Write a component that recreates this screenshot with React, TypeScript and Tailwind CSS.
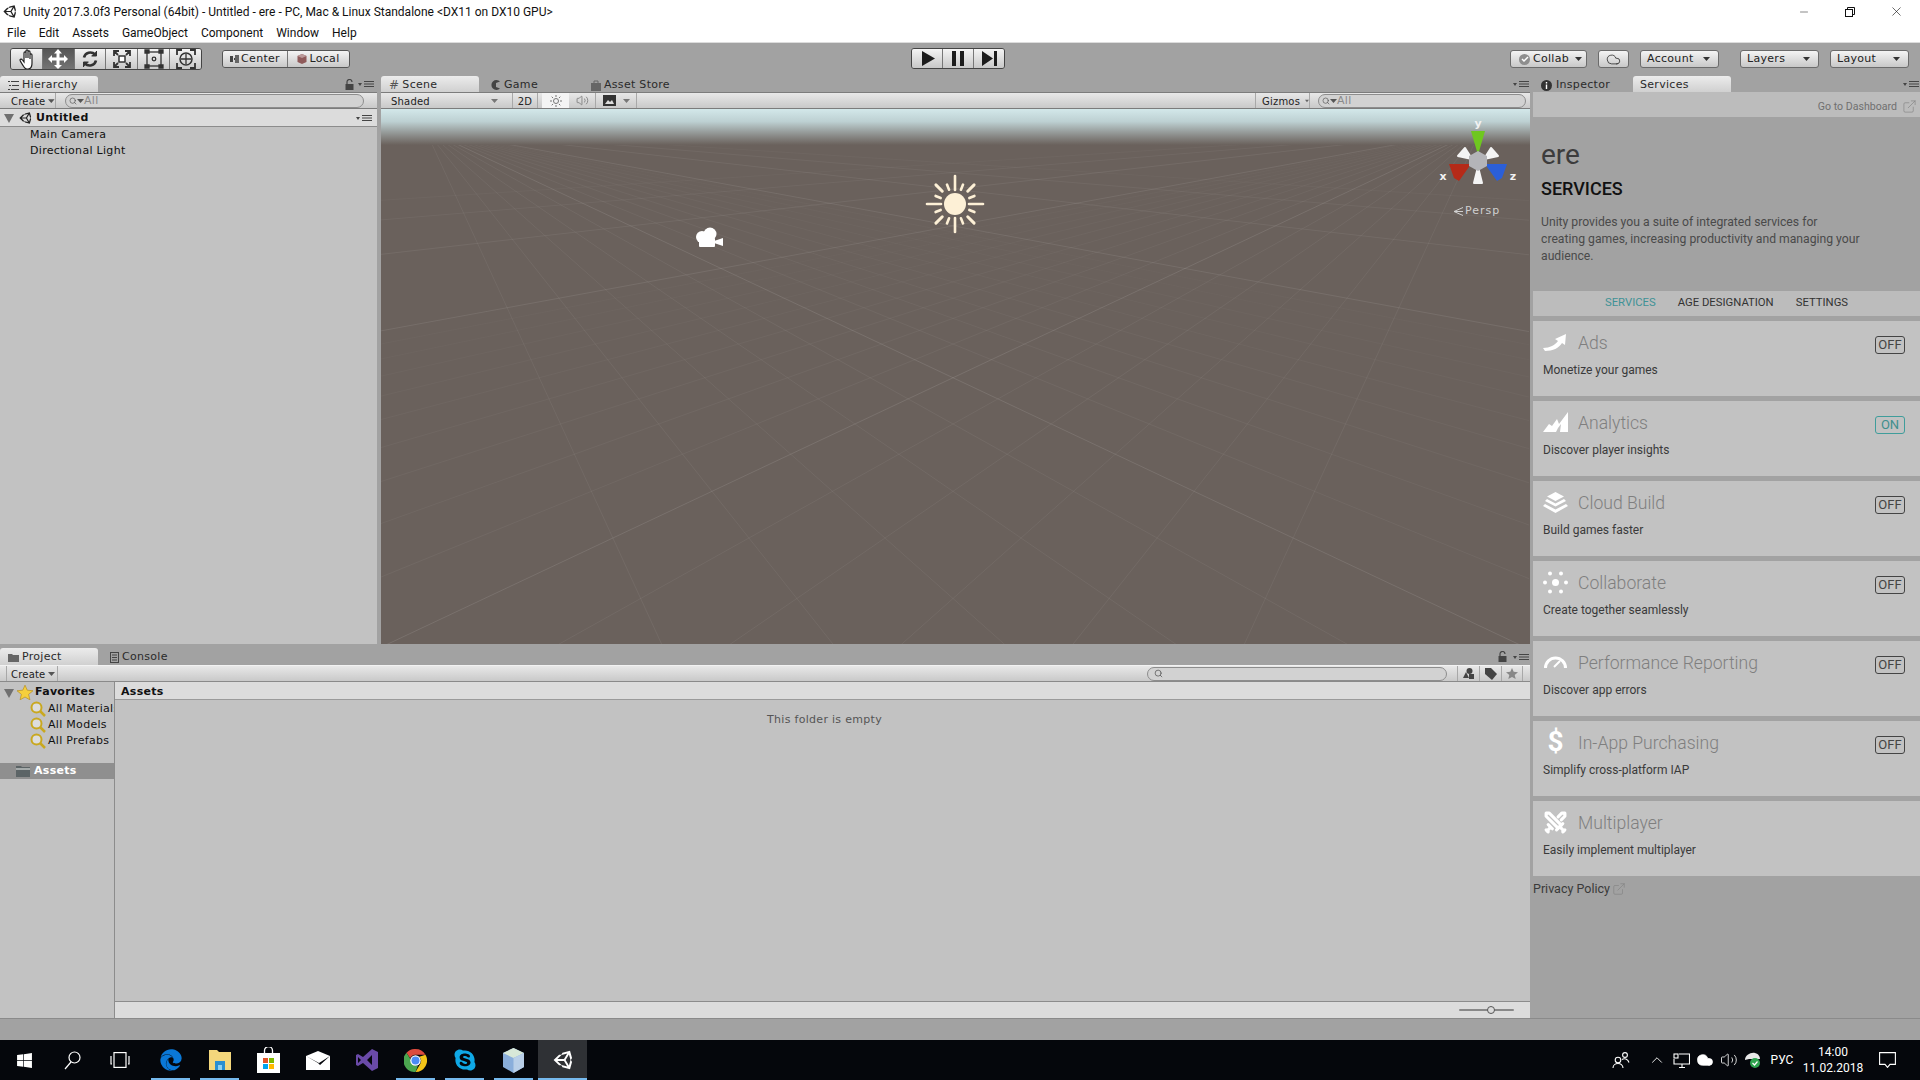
import { ReactNode } from 'react';
import { ChevronUp, Cloud, ExternalLink, Minus, Search, Swords, Volume2, X } from 'lucide-react';
import { FaEdge, FaSkype, FaUnity, FaWindows } from 'react-icons/fa';

const editorFont = "font-['DejaVu_Sans',sans-serif] text-[11px] tracking-[0.3px]";
const smallFont = "font-['DejaVu_Sans',sans-serif] text-[10px] tracking-[0.2px]";
const uiFont = "font-['Roboto',sans-serif]";
const systemFont = "font-['Roboto',sans-serif]";
const barBg = 'bg-linear-to-b from-[#e8e8e8] to-[#c9c9c9]';
const buttonBg = 'bg-linear-to-b from-[#f4f4f4] to-[#c8c8c8]';

/* little editor glyphs */
function PaneMenu() {
  return (
    <svg width="16" height="8" viewBox="0 0 16 8" fill="#444">
      <path d="M0 3h4L2 6z" />
      <path d="M6 1h10v1H6zM6 3.5h10v1H6zM6 6h10v1H6z" />
    </svg>
  );
}

function LockIcon() {
  return (
    <svg width="9" height="11" viewBox="0 0 9 11">
      <path d="M2 5V3a2.5 2.5 0 0 1 5 0" fill="none" stroke="#444" strokeWidth="1.2" />
      <rect x="0.5" y="5" width="8" height="6" fill="#444" />
    </svg>
  );
}

function Caret({ color = '#333' }: { color?: string }) {
  return (
    <svg width="7" height="4" viewBox="0 0 7 4" fill={color}>
      <path d="M0 0h7L3.5 4z" />
    </svg>
  );
}

function Disclosure() {
  return (
    <svg width="10" height="10" viewBox="0 0 10 10" fill="#707070">
      <path d="M0 1h10L5 10z" />
    </svg>
  );
}

function SearchField({ className }: { className: string }) {
  return (
    <div className={`${className} h-[14px] rounded-full border border-[#8d8d8d] bg-[#d2d2d2] flex items-center pl-[3px] text-[#8a8a8a] ${editorFont}`}>
      <Search size={8} color="#555" strokeWidth={2} />
      <Caret color="#555" />
      <span className="leading-none">All</span>
    </div>
  );
}

function ToolIcon({ kind }: { kind: number }) {
  const paths = [
    <path key="h" transform="translate(2 0)" d="M6 18c-2-3-4-6-4-7s1.500-1.500 2.500 0L6 13V4c0-1.500 2-1.500 2 0v5-7c0-1.500 2-1.500 2 0v7-6c0-1.500 2-1.500 2 0v7-4c0-1.500 2-1.500 2 0v8c0 4-2 6-4 6H9c-1 0-2-.5-3-2z" fill="#fff" stroke="#222" strokeWidth="1.200" />,
    <path key="m" d="M10 0l4 4.500h-2.500V8.500H16V6l4 4-4 4v-2.500h-4.500V16H14l-4 4-4-4h2.500v-4.500H4V14l-4-4 4-4v2.500h4.500V4.500H6z" fill="#fff" />,
    <g key="r" fill="none" stroke="#333" strokeWidth="2.600"><path d="M4 8.500a6.500 6.500 0 0 1 11-3" /><path d="M16 11.500a6.500 6.500 0 0 1-11 3" /><path d="M16.500 2v5h-5M3.500 18v-5h5" strokeWidth="1" fill="#333" /></g>,
    <g key="s" fill="none" stroke="#333" strokeWidth="1.800"><rect x="7" y="7" width="6" height="6" fill="#fff" strokeWidth="1.500" /><path d="M2 7V2h5M18 7V2h-5M2 13v5h5M18 13v5h-5M3 3l3 3M17 3l-3 3M3 17l3-3M17 17l-3-3" /></g>,
    <g key="t" fill="none" stroke="#333" strokeWidth="1.300"><rect x="3" y="3" width="14" height="14" /><circle cx="10" cy="10" r="1.800" /><path d="M1 1h4v3H1zM15 1h4v3h-4zM1 16h4v3H1zM15 16h4v3h-4z" fill="#333" /></g>,
    <g key="a" fill="none" stroke="#333" strokeWidth="1.800"><path d="M1 6V1h5M19 6V1h-5M1 14v5h5M19 14v5h-5" /><circle cx="10" cy="10" r="6" strokeWidth="1.500" /><path d="M10 5v10M5 10h10" strokeWidth="1.300" /></g>,
  ];
  return (
    <svg width="20" height="20" viewBox="0 0 20 20">
      {paths[kind]}
    </svg>
  );
}

function Toolbar() {
  return (
    <div className="h-[34px] bg-[#a2a2a2] border-t border-[#dcdcdc] flex items-start pt-[5px] text-[#222]">
      <div className="ml-[10px] flex w-[192px] h-[22px] rounded-[3px] border border-[#444] overflow-hidden">
        {[0, 1, 2, 3, 4, 5].map((i) => (
          <div
            key={i}
            className={`flex-1 flex items-center justify-center border-r border-[#777] last:border-r-0 ${i === 1 ? 'bg-linear-to-b from-[#565656] to-[#747474]' : buttonBg}`}
          >
            <ToolIcon kind={i} />
          </div>
        ))}
      </div>
      <div className={`ml-[20px] mt-[2px] flex w-[128px] h-[18px] rounded-[3px] border border-[#555] overflow-hidden ${editorFont}`}>
        <div className={`w-[65px] flex items-center justify-center gap-[2px] border-r border-[#777] ${buttonBg}`}>
          <svg width="9" height="8" viewBox="0 0 9 8" fill="#444"><path d="M0 1h3v6H0zM4 3h5v2H4z" /><path d="M5 0h4v8H5z" fill="#666" /></svg>
          <span>Center</span>
        </div>
        <div className={`flex-1 flex items-center justify-center gap-[2px] ${buttonBg}`}>
          <svg width="10" height="10" viewBox="0 0 10 10"><path d="M5 0l4.500 2v6L5 10 .5 8V2z" fill="#8f5a5a" /><path d="M.5 2L5 4l4.500-2L5 0z" fill="#b99" /></svg>
          <span>Local</span>
        </div>
      </div>
      <div className="ml-[561px] flex w-[94px] h-[21px] rounded-[3px] border border-[#444] overflow-hidden">
        {['M2 0l13 7.500L2 15z', 'M0 0h4v15H0zM8 0h4v15H8z', 'M0 0l11 7.500L0 15zM12 0h3v15h-3z'].map((d, i) => (
          <div key={d} className={`flex-1 flex items-center justify-center border-r border-[#777] last:border-r-0 ${buttonBg}`}>
            <svg width={i === 1 ? 12 : 15} height="15" viewBox={i === 1 ? '0 0 12 15' : '0 0 15 15'} fill="#1c1c1c"><path d={d} /></svg>
          </div>
        ))}
      </div>
      <div className={`ml-auto mr-[11px] mt-[2px] flex ${editorFont}`}>
        <div className={`w-[77px] h-[18px] rounded-[3px] border border-[#6b6b6b] flex items-center pl-[8px] gap-[3px] ${buttonBg}`}>
          <span className="size-[11px] rounded-full bg-[#8e8e8e] flex items-center justify-center">
            <svg width="8" height="8" viewBox="0 0 8 8" fill="none" stroke="#fff" strokeWidth="1.500"><path d="M1 4l2 2 4-4" /></svg>
          </span>
          <span>Collab</span>
          <span className="ml-[3px]"><Caret /></span>
        </div>
        <div className={`ml-[11px] w-[31px] h-[18px] rounded-[3px] border border-[#6b6b6b] flex items-center justify-center ${buttonBg}`}>
          <Cloud size={15} strokeWidth={1.200} color="#222" />
        </div>
        <DropButton label="Account" className="ml-[11px]" />
        <DropButton label="Layers" className="ml-[21px]" />
        <DropButton label="Layout" className="ml-[11px]" />
      </div>
    </div>
  );
}

function DropButton({ label, className }: { label: string; className: string }) {
  return (
    <div className={`${className} w-[79px] h-[18px] rounded-[3px] border border-[#6b6b6b] flex items-center justify-between pl-[6px] pr-[8px] ${buttonBg}`}>
      <span>{label}</span>
      <Caret />
    </div>
  );
}

function Tab({ icon, label, active, className = '' }: { icon?: ReactNode; label: string; active?: boolean; className?: string }) {
  return (
    <div
      className={`h-[16px] w-[98px] pt-[2px] flex items-center gap-[3px] rounded-t-[3px] text-[#2a2a2a] ${editorFont} ${active ? 'bg-linear-to-b from-[#ececec] to-[#d0d0d0] pl-[8px]' : ''} ${className}`}
    >
      {icon}
      <span>{label}</span>
    </div>
  );
}

function Hierarchy() {
  return (
    <div className="w-[377px] flex flex-col">
      <div className="h-[16px] flex items-center">
        <Tab
          active
          label="Hierarchy"
          icon={
            <svg width="11" height="9" viewBox="0 0 11 9" fill="#444"><path d="M0 0h2v1H0zM3 0h8v1H3zM1 4h2v1H1zM4 4h7v1H4zM0 8h2v1H0zM3 8h8v1H3z" /></svg>
          }
        />
        <div className="ml-auto flex items-center gap-[4px] pr-[3px]">
          <LockIcon />
          <PaneMenu />
        </div>
      </div>
      <div className={`h-[17px] border-t border-[#7c7c7c] border-b ${barBg} flex items-center`}>
        <div className={`w-[56px] h-full pl-[11px] pt-[1px] flex items-center gap-[3px] border-r border-[#a8a8a8] text-[#222] ${smallFont}`}>
          <span>Create</span>
          <Caret color="#555" />
        </div>
        <SearchField className="ml-[9px] w-[299px]" />
      </div>
      <div className="flex-1 bg-[#c2c2c2]">
        <div className="h-[18px] bg-[#dcdcdc] border-b border-[#8c8c8c] flex items-center pl-[4px] pt-[1px] text-[#111]">
          <Disclosure />
          <FaUnity size={14} color="#222" className="ml-[5px]" />
          <span className={`ml-[3px] font-bold ${editorFont}`}>Untitled</span>
          <span className="ml-auto pr-[5px]"><PaneMenu /></span>
        </div>
        <div className={`pl-[30px] text-[#111] ${editorFont}`}>
          <div className="h-[16px] leading-[16px]">Main Camera</div>
          <div className="h-[16px] leading-[16px]">Directional Light</div>
        </div>
      </div>
    </div>
  );
}

/* ground grid of the scene view: two pencils of lines from the vanishing points */
const HORIZON = 20;
function gridLines() {
  const lines: { x1: number; y1: number; x2: number; y2: number; o: number }[] = [];
  const add = (v: number, o: number) => {
    const y = HORIZON + 1 / v;
    for (const vpx of [44, 1100]) {
      const slope = (y - HORIZON) / (572 - vpx);
      lines.push({ x1: vpx, y1: HORIZON, x2: vpx + 1400 * Math.sign(572 - vpx), y2: HORIZON + 1400 * Math.abs(slope), o });
    }
  };
  for (let n = 0; n < 5; n++) add(0.00402 + 0.0063 * n, 0.1 - n * 0.018);
  for (let k = -5; k <= 9; k++) {
    if (k === 0) continue;
    const v = 0.00402 + 0.00063 * k;
    if (v > 0.0004) add(v, k < 0 ? 0.055 : Math.max(0.02, 0.05 - k * 0.004));
  }
  return lines;
}

function Sun() {
  const rays: ReactNode[] = [];
  for (let i = 0; i < 16; i++) {
    const a = (i * Math.PI) / 8;
    const [r1, r2, w] = i % 4 === 0 ? [14, 28, 2.6] : i % 2 === 0 ? [18, 27, 3] : [15.500, 21, 2.600];
    rays.push(
      <line key={i} x1={30 + r1 * Math.cos(a)} y1={30 + r1 * Math.sin(a)} x2={30 + r2 * Math.cos(a)} y2={30 + r2 * Math.sin(a)} strokeWidth={w} stroke="#fdf0d6" strokeLinecap="round" />
    );
  }
  return (
    <svg width="60" height="60" viewBox="0 0 60 60" className="absolute left-[544px] top-[65px]">
      {rays}
      <circle cx="30" cy="30" r="11" fill="#fdf0d6" />
    </svg>
  );
}

function Gizmo() {
  return (
    <svg width="100" height="90" viewBox="0 0 100 90" className="absolute left-[1047px] top-[2px]">
      <polygon points="43,20 57,20 50,44" fill="#6fc71f" />
      <polygon points="44,48 30,45 37,37" fill="#f4f4f4" stroke="#f4f4f4" strokeWidth="2" strokeLinejoin="round" />
      <polygon points="56,48 70,45 63,37" fill="#f4f4f4" stroke="#f4f4f4" strokeWidth="2" strokeLinejoin="round" />
      <polygon points="50,56 46,72 54,72" fill="#f4f4f4" stroke="#f4f4f4" strokeWidth="2" strokeLinejoin="round" />
      <polygon points="21,53 43,53 31,70 26,67" fill="#b52a18" />
      <polygon points="79,53 57,53 69,70 74,67" fill="#2b5fd8" />
      <polygon points="50,40 59,45 59,55 50,60 41,55 41,45" fill="#b4b4b8" />
      <text x="50" y="16" textAnchor="middle" fill="#f2f2f2" fontSize="11" fontWeight="700" fontFamily="DejaVu Sans">y</text>
      <text x="15" y="69" textAnchor="middle" fill="#f2f2f2" fontSize="11" fontWeight="700" fontFamily="DejaVu Sans">x</text>
      <text x="85" y="69" textAnchor="middle" fill="#f2f2f2" fontSize="11" fontWeight="700" fontFamily="DejaVu Sans">z</text>
    </svg>
  );
}

function SceneView() {
  return (
    <div className="flex-1 relative overflow-hidden bg-[#6a615c]">
      <svg width="1148" height="538" className="absolute left-0 top-0">
        {gridLines().map((l, i) => (
          <line key={i} x1={l.x1} y1={l.y1} x2={l.x2} y2={l.y2} stroke="#fff" strokeOpacity={l.o} />
        ))}
      </svg>
      <div className="absolute inset-x-0 top-0 h-[36px] bg-linear-to-b from-[#d3e8ea] from-0% via-[#bdd0d2] via-35% to-[#6a615c] to-100%" />
      <Sun />
      <svg width="28" height="20" viewBox="0 0 28 20" fill="#fff" className="absolute left-[314px] top-[118px]">
        <circle cx="7" cy="10" r="6" />
        <circle cx="15" cy="7" r="6.500" />
        <rect x="4" y="11" width="16" height="9" rx="1" />
        <path d="M19 14l9-3v8l-9-3z" />
      </svg>
      <Gizmo />
      <div className={`absolute left-[1072px] top-[94px] flex items-center gap-[2px] text-[#d0d0d0] ${editorFont} tracking-[1px]`}>
        <svg width="10" height="9" viewBox="0 0 10 9" fill="none" stroke="#d0d0d0"><path d="M10 0.500L1 4.500l9 4M10 4.500H1" /></svg>
        <span>Persp</span>
      </div>
    </div>
  );
}

function Scene() {
  return (
    <div className="ml-[4px] flex-1 flex flex-col">
      <div className="h-[16px] flex items-center">
        <Tab active label="Scene" icon={<span className="text-[12px] leading-none text-[#555]">#</span>} />
        <Tab className="ml-[12px] !w-[100px]" label="Game" icon={<svg width="10" height="10" viewBox="0 0 10 10" fill="#444"><path d="M9 1.500A5 5 0 1 0 9 8.500L5 7V3z" /></svg>} />
        <Tab
          className="!w-[130px]"
          label="Asset Store"
          icon={<svg width="10" height="11" viewBox="0 0 10 11" fill="#666"><path d="M0 3h10v8H0z" /><path d="M3 3V1h4v2" fill="none" stroke="#666" /></svg>}
        />
        <span className="ml-auto pr-[1px]"><PaneMenu /></span>
      </div>
      <div className={`h-[17px] border-t border-b border-[#7c7c7c] ${barBg} flex items-center text-[#222] ${smallFont}`}>
        <div className="w-[125px] pl-[10px] pr-[8px] pt-[1px] h-full flex items-center justify-between">
          <span>Shaded</span>
          <Caret color="#777" />
        </div>
        <div className="ml-[6px] w-[26px] pt-[1px] h-full flex items-center justify-center border-x border-[#a8a8a8]">2D</div>
        <div className="ml-[4px] w-[27px] h-full bg-[#f4f4f4] flex items-center justify-center">
          <svg width="12" height="12" viewBox="0 0 12 12" fill="none" stroke="#777"><circle cx="6" cy="6" r="2.500" /><path d="M6 0v2M6 10v2M0 6h2M10 6h2M1.700 1.700l1.400 1.400M8.900 8.900l1.400 1.400M1.700 10.300l1.400-1.400M8.900 3.100l1.400-1.400" /></svg>
        </div>
        <div className="w-[27px] h-full flex items-center justify-center border-r border-[#a8a8a8]">
          <Volume2 size={13} color="#777" strokeWidth={1.500} />
        </div>
        <div className="w-[41px] pl-[7px] h-full flex items-center gap-[7px] border-r border-[#a8a8a8]">
          <svg width="13" height="11" viewBox="0 0 13 11"><rect width="13" height="11" fill="#333" /><path d="M2 9l3-4 2 2 2-2 2 4z" fill="#ddd" /></svg>
          <Caret color="#777" />
        </div>
        <div className="ml-[618px] w-[55px] pt-[1px] h-full border-x border-[#a8a8a8] pl-[6px] flex items-center gap-[5px]">
          <span>Gizmos</span>
          <Caret color="#666" />
        </div>
        <SearchField className="ml-[8px] w-[208px]" />
      </div>
      <SceneView />
    </div>
  );
}

function Lens({ label }: { label: string }) {
  return (
    <div className="h-[16px] flex items-center pl-[30px] gap-[2px] text-[#111]">
      <svg width="16" height="16" viewBox="0 0 16 16" fill="none" className="shrink-0">
        <circle cx="6.500" cy="6.500" r="5" stroke="#c9a820" strokeWidth="2" fill="#ddd" />
        <path d="M10 10l5 5" stroke="#c9a820" strokeWidth="2.500" />
      </svg>
      <span className={`whitespace-nowrap ${editorFont}`}>{label}</span>
    </div>
  );
}

function Project() {
  return (
    <div className="mt-[4px] h-[370px] flex flex-col">
      <div className="h-[17px] flex items-center">
        <Tab
          active
          className="!h-[17px]"
          label="Project"
          icon={<svg width="11" height="9" viewBox="0 0 11 9" fill="#666"><path d="M0 1h4l1 1h6v7H0z" /></svg>}
        />
        <Tab
          className="ml-[12px]"
          label="Console"
          icon={<svg width="9" height="11" viewBox="0 0 9 11" fill="none" stroke="#444"><rect x=".5" y=".5" width="8" height="10" /><path d="M2 3h5M2 5.500h5M2 8h5" /></svg>}
        />
        <div className="ml-auto flex items-center gap-[6px] pr-[1px]">
          <LockIcon />
          <PaneMenu />
        </div>
      </div>
      <div className={`h-[17px] border-t border-t-[#f2f2f2] border-b border-b-[#8a8a8a] ${barBg} flex items-center`}>
        <div className={`ml-[6px] w-[52px] pt-[1px] h-full border-x border-[#a8a8a8] pl-[4px] flex items-center gap-[3px] text-[#222] ${smallFont}`}>
          <span>Create</span>
          <Caret color="#555" />
        </div>
        <div className="ml-[1089px] w-[300px] h-[14px] rounded-full border border-[#8d8d8d] bg-[#d2d2d2] flex items-center pl-[6px]">
          <Search size={9} color="#555" strokeWidth={2} />
        </div>
        <div className="ml-[10px] w-[22px] h-full border-l border-[#a8a8a8] flex items-center justify-center">
          <svg width="11" height="11" viewBox="0 0 11 11" fill="#444"><circle cx="6.500" cy="3" r="3" /><rect x="6" y="6" width="5" height="5" /><path d="M3 4L6 10H0z" /></svg>
        </div>
        <div className="w-[22px] h-full border-l border-[#a8a8a8] flex items-center justify-center">
          <svg width="12" height="12" viewBox="0 0 12 12" fill="#444"><path d="M0 0h6l6 6-5 6-7-6z" /></svg>
        </div>
        <div className="w-[22px] h-full border-x border-[#a8a8a8] flex items-center justify-center">
          <svg width="12" height="11" viewBox="0 0 12 11" fill="#888"><path d="M6 0l1.700 3.800 4.300.4-3.300 2.700 1 4.100L6 8.900 2.300 11l1-4.100L0 4.200l4.300-.4z" /></svg>
        </div>
      </div>
      <div className="flex-1 flex bg-[#c2c2c2] min-h-0">
        <div className="w-[115px] shrink-0 border-r border-[#8c8c8c] overflow-hidden pt-[1px]">
          <div className="h-[18px] pt-[1px] flex items-center pl-[4px] text-[#111]">
            <Disclosure />
            <svg width="16" height="15" viewBox="0 0 12 11" fill="#f5cf3c" stroke="#b58d1c" strokeWidth=".5" className="ml-[3px]"><path d="M6 0l1.700 3.800 4.300.4-3.300 2.700 1 4.100L6 8.900 2.300 11l1-4.100L0 4.200l4.300-.4z" /></svg>
            <span className={`ml-[2px] font-bold ${editorFont}`}>Favorites</span>
          </div>
          <Lens label="All Materials" />
          <Lens label="All Models" />
          <Lens label="All Prefabs" />
          <div className="mt-[14px] h-[16px] bg-[#8f8f8f] flex items-center pl-[16px] gap-[4px]">
            <svg width="14" height="12" viewBox="0 0 14 12"><path d="M0 1h5l1 1h8v10H0z" fill="#5c6466" /><path d="M0 3h14v2H0z" fill="#a5abab" /></svg>
            <span className={`font-bold text-white ${editorFont}`}>Assets</span>
          </div>
        </div>
        <div className="flex-1 flex flex-col">
          <div className={`h-[18px] bg-[#dcdcdc] border-b border-[#9a9a9a] pl-[6px] pt-[3px] flex items-center font-bold text-[#111] ${editorFont}`}>Assets</div>
          <div className={`flex-1 pt-[12px] pl-[652px] text-[#555] ${editorFont}`}>This folder is empty</div>
          <div className="h-[17px] bg-[#dcdcdc] border-t border-[#8c8c8c] flex items-center justify-end pr-[16px]">
            <div className="relative w-[55px] h-[2px] rounded-full bg-[#888]">
              <div className="absolute left-[28px] -top-[3px] size-[8px] rounded-full bg-[#dcdcdc] border border-[#555]" />
            </div>
          </div>
        </div>
      </div>
    </div>
  );
}

const services: { title: string; desc: string; on?: boolean; icon: ReactNode }[] = [
  {
    title: 'Ads',
    desc: 'Monetize your games',
    icon: <svg width="25" height="18" viewBox="0 0 25 18" fill="#fff"><path d="M0 15c7 0 12-3 15-7l-3-2 11-5-1 11-3-2c-3 5-9 8-17 8z" /></svg>,
  },
  {
    title: 'Analytics',
    desc: 'Discover player insights',
    on: true,
    icon: <svg width="25" height="20" viewBox="0 0 25 20" fill="#fff"><path d="M0 20l6-8 3 2 5-7 2 5 9-12v20h-8l1-8-3 4-2 4z" /></svg>,
  },
  {
    title: 'Cloud Build',
    desc: 'Build games faster',
    icon: <svg width="25" height="21" viewBox="0 0 25 21" fill="#fff"><path d="M12.500 0L21 4.500 12.500 9 4 4.500z" /><path d="M4 7l8.500 4.500L21 7l2 2-10.500 5.500L2 9z" /><path d="M2 12l10.500 5.500L23 12l2 2-12.500 7L0 14z" /></svg>,
  },
  {
    title: 'Collaborate',
    desc: 'Create together seamlessly',
    icon: <svg width="25" height="23" viewBox="0 0 25 23" fill="#fff"><circle cx="12.500" cy="11.500" r="3.500" /><circle cx="7" cy="2.500" r="2" /><circle cx="18" cy="2.500" r="2" /><circle cx="2" cy="11.500" r="2" /><circle cx="23" cy="11.500" r="2" /><circle cx="7" cy="20.500" r="2" /><circle cx="18" cy="20.500" r="2" /></svg>,
  },
  {
    title: 'Performance Reporting',
    desc: 'Discover app errors',
    icon: <svg width="23" height="13" viewBox="0 0 23 13" fill="none" stroke="#fff"><path d="M1.500 12a10 10 0 0 1 20 0" strokeWidth="3" /><path d="M10 11l6-6" strokeWidth="2" /></svg>,
  },
  {
    title: 'In-App Purchasing',
    desc: 'Simplify cross-platform IAP',
    icon: <span className={`${uiFont} text-[28px] font-bold leading-none text-white`}>$</span>,
  },
  {
    title: 'Multiplayer',
    desc: 'Easily implement multiplayer',
    icon: <Swords size={25} color="#fff" strokeWidth={3} />,
  },
];

function ServiceCard({ title, desc, on, icon }: (typeof services)[number]) {
  return (
    <div className="h-[75px] bg-[#c2c2c2] pl-[10px] pt-[8px]">
      <div className="h-[26px] flex items-center">
        <div className="w-[25px] h-[26px] flex items-center justify-center">{icon}</div>
        <span className={`ml-[10px] mt-[2px] ${uiFont} font-light text-[17.6px] text-[#7f7f7f]`}>{title}</span>
        {title !== 'Multiplayer' ? (
          <span
            className={`ml-auto mr-[15px] mt-[5px] w-[30px] h-[18px] rounded-[3px] border-[1.500px] flex items-center justify-center text-[13px] ${uiFont} ${on ? 'border-[#3f9d9b] text-[#3f8f8d]' : 'border-[#444] text-[#444]'}`}
          >
            {on ? 'ON' : 'OFF'}
          </span>
        ) : null}
      </div>
      <div className={`mt-[7px] h-[16px] leading-[16px] text-[12px] text-[#3a3a3a] ${uiFont}`}>{desc}</div>
    </div>
  );
}

function Services() {
  return (
    <div className="flex-1 pl-[3px] flex flex-col">
      <div className="h-[16px] flex items-center">
        <div className={`ml-[8px] w-[92px] pt-[2px] flex items-center gap-[4px] text-[#2a2a2a] ${editorFont}`}>
          <svg width="11" height="11" viewBox="0 0 11 11"><circle cx="5.500" cy="5.500" r="5.500" fill="#333" /><path d="M4.800 2h1.400v1.400H4.800zM4.800 4.500h1.400V9H4.800z" fill="#fff" /></svg>
          <span>Inspector</span>
        </div>
        <Tab active className="!w-[98px] !pl-[7px]" label="Services" />
        <span className="ml-auto pr-[1px]"><PaneMenu /></span>
      </div>
      <div className={`flex-1 bg-[#a2a2a2] ${uiFont}`}>
        <div className="h-[25px] pt-[4px] bg-[#bcbcbc] flex items-center justify-end gap-[5px] pr-[3px] text-[10.6px] text-[#707070]">
          <span>Go to Dashboard</span>
          <ExternalLink size={15} color="#808080" strokeWidth={1} />
        </div>
        <div className="h-[174px] pl-[8px]">
          <div className="pt-[20px] h-[56px] leading-[36px] text-[28px] text-[#3c3c3c]">ere</div>
          <div className="mt-[4px] h-[24px] leading-[24px] text-[18px] font-medium text-[#111]">SERVICES</div>
          <p className="mt-[13px] w-[322px] text-[12.2px] leading-[17px] text-[#4a4a4a]">
            Unity provides you a suite of integrated services for creating games, increasing productivity and managing your audience.
          </p>
        </div>
        <div className="h-[25px] bg-[#bcbcbc] flex items-center justify-center gap-[22px] text-[11.3px] text-[#333]">
          <span className="text-[#3f9296]">SERVICES</span>
          <span>AGE DESIGNATION</span>
          <span>SETTINGS</span>
        </div>
        <div className="mt-[5px] flex flex-col gap-[5px]">
          {services.map((s) => (
            <ServiceCard key={s.title} {...s} />
          ))}
        </div>
        <div className="h-[26px] flex items-center gap-[2px] text-[12.5px] text-[#3a3a3a]">
          <span>Privacy Policy</span>
          <ExternalLink size={14} color="#808080" strokeWidth={1} />
        </div>
      </div>
    </div>
  );
}

function TaskIcon({ children, open, active }: { children: ReactNode; open?: boolean; active?: boolean }) {
  return (
    <div className={`relative w-[49px] h-[40px] flex items-center justify-center ${active ? 'bg-[#2f3135]' : ''}`}>
      {children}
      {open && <div className={`absolute bottom-0 h-[2px] bg-[#76b9ed] ${active ? 'inset-x-0' : 'inset-x-[5px]'}`} />}
    </div>
  );
}

function Taskbar() {
  return (
    <div className="h-[40px] bg-[#05070c] flex items-center">
      <div className="w-[48px] flex justify-center"><FaWindows size={17} color="#fff" /></div>
      <div className="w-[48px] flex justify-center">
        <svg width="17" height="19" viewBox="0 0 17 19" fill="none" stroke="#fff" strokeWidth="1.200"><circle cx="10.500" cy="6.500" r="5.500" /><path d="M7 11l-6 7" /></svg>
      </div>
      <div className="w-[48px] flex justify-center">
        <svg width="20" height="16" viewBox="0 0 20 16" fill="none" stroke="#fff" strokeWidth="1.200"><rect x="4" y="0.600" width="12" height="14.800" /><path d="M1 4v8h1M19 4v8h-1" /></svg>
      </div>
      <div className="ml-[2px] flex">
        <TaskIcon open><FaEdge size={22} color="#0a78d7" /></TaskIcon>
        <TaskIcon open>
          <svg width="22" height="20" viewBox="0 0 22 20"><path d="M0 0h8l2 2h12v18H0z" fill="#f4d77c" /><rect x="6" y="11" width="10" height="9" fill="#2a8fd1" /><rect x="9" y="15" width="4" height="5" fill="#8fd0f0" /></svg>
        </TaskIcon>
        <TaskIcon>
          <svg width="23" height="26" viewBox="0 0 23 26"><path d="M0 6h23v20H0z" fill="#fff" /><path d="M7.500 9V3.500a4 4 0 0 1 8 0V9" fill="none" stroke="#fff" strokeWidth="1.300" /><rect x="6" y="11" width="5" height="5" fill="#e3542a" /><rect x="12" y="11" width="5" height="5" fill="#7fba00" /><rect x="6" y="17" width="5" height="5" fill="#00a4ef" /><rect x="12" y="17" width="5" height="5" fill="#ffb900" /></svg>
        </TaskIcon>
        <TaskIcon>
          <svg width="24" height="19" viewBox="0 0 24 19"><path d="M0 5l12-5 12 5v14H0z" fill="#fff" /><path d="M0 5l13 7 11-7-10 9-2-2z" fill="#05070c" /></svg>
        </TaskIcon>
        <TaskIcon>
          <svg width="24" height="24" viewBox="0 0 24 24" fill="#6a4aa8"><path d="M17 1l6 3v16l-6 3-9-8-5 3-2-1V7l2-1 5 3zM17 7l-5 5 5 5zM3 9v6l3-3z" fillRule="evenodd" /></svg>
        </TaskIcon>
        <TaskIcon open>
          <svg width="23" height="23" viewBox="0 0 24 24">
            <path d="M12 0a12 12 0 0 1 10.400 6H12a6 6 0 0 0-5.600 3.700L2.600 3.900A12 12 0 0 1 12 0z" fill="#dd4b3e" />
            <path d="M22.400 6A12 12 0 0 1 12 24l5.200-9A6 6 0 0 0 16 8z" fill="#f5c518" />
            <path d="M2.600 3.900L7.500 12a6 6 0 0 0 7 5.500L12 24A12 12 0 0 1 2.600 3.900z" fill="#4ba64f" />
            <circle cx="12" cy="12" r="5.500" fill="#fff" />
            <circle cx="12" cy="12" r="4.200" fill="#4b8bf5" />
          </svg>
        </TaskIcon>
        <TaskIcon open><FaSkype size={24} color="#0fa8e6" /></TaskIcon>
        <TaskIcon open>
          <svg width="21" height="25" viewBox="0 0 21 25"><path d="M10.500 0L21 5v14l-10.500 6L0 19V5z" fill="#8aaedb" /><path d="M10.500 0L21 5l-10.500 5L0 5z" fill="#d8e8d8" /><path d="M10.500 10L21 5v14l-10.500 6z" fill="#b9cfe8" /></svg>
        </TaskIcon>
        <TaskIcon open active><FaUnity size={22} color="#fff" className="ml-[3px]" /></TaskIcon>
      </div>
      <div className={`ml-auto mr-[13px] flex items-center text-white ${systemFont}`}>
        <div className="w-[24px] mr-[12px] flex justify-center">
          <svg width="18" height="17" viewBox="0 0 18 17" fill="none" stroke="#fff" strokeWidth="1.100"><circle cx="6" cy="8" r="2.800" /><path d="M1 16c0-6 10-6 10 0" /><circle cx="13" cy="3" r="2.400" /><path d="M10 7.500c2-1.500 6-1 7 3" /></svg>
        </div>
        <div className="w-[24px] flex justify-center"><ChevronUp size={18} color="#fff" strokeWidth={1.200} /></div>
        <div className="w-[24px] flex justify-center">
          <svg width="17" height="15" viewBox="0 0 17 15" fill="none" stroke="#fff" strokeWidth="1.100"><path d="M6 1h10.500v10H1V6" /><rect x="1" y="1" width="4" height="4" /><path d="M9 11v3M6 14.500h6" /></svg>
        </div>
        <div className="w-[24px] flex justify-center"><Cloud size={18} color="#fff" fill="#fff" strokeWidth={1} /></div>
        <div className="w-[24px] flex justify-center"><Volume2 size={18} color="#fff" strokeWidth={1.100} /></div>
        <div className="w-[24px] flex justify-center">
          <svg width="18" height="16" viewBox="0 0 18 16"><path d="M1 8c0-5 6-8 10-7s5 4 5 6H5c-1 0-3 1-4 1z" fill="#e8e8e8" /><circle cx="11" cy="11" r="5" fill="#2ea44f" /><path d="M8.500 11l2 2 3-3.500" fill="none" stroke="#fff" strokeWidth="1.200" /></svg>
        </div>
        <div className="w-[34px] text-center text-[12px]">РУС</div>
        <div className="w-[68px] text-center text-[12px] leading-[16px]">
          <div>14:00</div>
          <div>11.02.2018</div>
        </div>
        <div className="w-[40px] flex justify-center">
          <svg width="17" height="16" viewBox="0 0 17 16" fill="none" stroke="#fff" strokeWidth="1.100"><path d="M.6.600h15.800v11.800h-5.400l-2.500 3-2.500-3H.6z" /></svg>
        </div>
      </div>
    </div>
  );
}

export default function App() {
  return (
    <div className="w-[1920px] h-[1080px] overflow-hidden flex flex-col bg-[#a2a2a2]">
      <div className={`h-[22px] pt-[1px] bg-white flex items-center text-[12px] text-[#111] ${systemFont}`}>
        <FaUnity size={15} color="#222" className="ml-[3px]" />
        <span className="ml-[5px]">{'Unity 2017.3.0f3 Personal (64bit) - Untitled - ere - PC, Mac & Linux Standalone <DX11 on DX10 GPU>'}</span>
        <div className="ml-auto mr-[1px] flex items-center">
          <div className="w-[46px] flex justify-center"><Minus size={12} color="#111" strokeWidth={1} /></div>
          <div className="w-[46px] flex justify-center">
            <svg width="10" height="10" viewBox="0 0 10 10" fill="none" stroke="#111"><rect x=".5" y="2.500" width="7" height="7" /><path d="M2.500 2.500v-2h7v7h-2" /></svg>
          </div>
          <div className="w-[46px] flex justify-center"><X size={15} color="#111" strokeWidth={1} /></div>
        </div>
      </div>
      <div className={`h-[20px] pt-[1px] bg-white flex items-center gap-[13px] pl-[7px] text-[12px] text-[#111] ${systemFont}`}>
        {['File', 'Edit', 'Assets', 'GameObject', 'Component', 'Window', 'Help'].map((m) => (
          <span key={m}>{m}</span>
        ))}
      </div>
      <Toolbar />
      <div className="h-[942px] flex">
        <div className="w-[1530px] flex flex-col">
          <div className="h-[568px] flex">
            <Hierarchy />
            <Scene />
          </div>
          <Project />
        </div>
        <Services />
      </div>
      <div className="h-[22px] bg-[#a2a2a2] border-t border-[#8a8a8a]" />
      <Taskbar />
    </div>
  );
}
